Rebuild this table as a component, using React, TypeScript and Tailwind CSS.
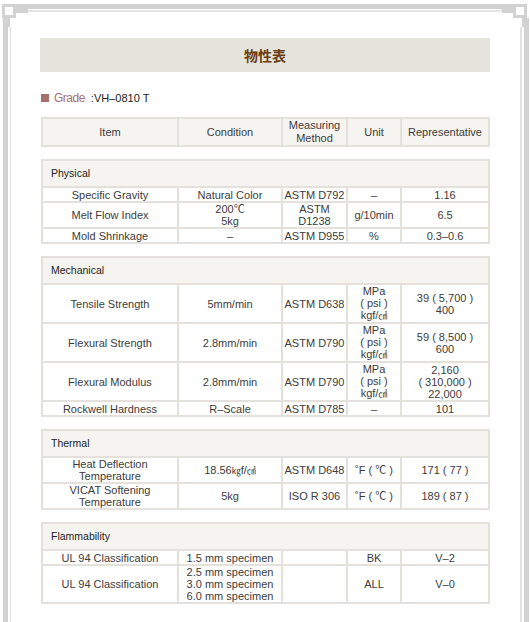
import React from 'react';

type Row = {
  item: React.ReactNode;
  cond: React.ReactNode;
  method: React.ReactNode;
  unit: React.ReactNode;
  rep: React.ReactNode;
};

// small CJK unit glyphs (㎠, ㎏)
const Cjk = ({ c }: { c: string }) => (
  <span className="text-[9px]" style={{ fontFamily: '"Noto Sans CJK KR", sans-serif' }}>
    {c}
  </span>
);

const kgfcm = (
  <>
    kgf/<Cjk c="㎠" />
  </>
);

const sections: { title: string; rows: Row[] }[] = [
  {
    title: 'Physical',
    rows: [
      { item: 'Specific Gravity', cond: 'Natural Color', method: 'ASTM D792', unit: '–', rep: '1.16' },
      {
        item: 'Melt Flow Index',
        cond: (<>200℃<br />5kg</>),
        method: (<>ASTM<br />D1238</>),
        unit: 'g/10min',
        rep: '6.5',
      },
      { item: 'Mold Shrinkage', cond: '–', method: 'ASTM D955', unit: '%', rep: '0.3–0.6' },
    ],
  },
  {
    title: 'Mechanical',
    rows: [
      {
        item: 'Tensile Strength',
        cond: '5mm/min',
        method: 'ASTM D638',
        unit: (<>MPa<br />( psi )<br />{kgfcm}</>),
        rep: (<>39 ( 5,700 )<br />400</>),
      },
      {
        item: 'Flexural Strength',
        cond: '2.8mm/min',
        method: 'ASTM D790',
        unit: (<>MPa<br />( psi )<br />{kgfcm}</>),
        rep: (<>59 ( 8,500 )<br />600</>),
      },
      {
        item: 'Flexural Modulus',
        cond: '2.8mm/min',
        method: 'ASTM D790',
        unit: (<>MPa<br />( psi )<br />{kgfcm}</>),
        rep: (<>2,160<br />( 310,000 )<br />22,000</>),
      },
      { item: 'Rockwell Hardness', cond: 'R–Scale', method: 'ASTM D785', unit: '–', rep: '101' },
    ],
  },
  {
    title: 'Thermal',
    rows: [
      {
        item: (<>Heat Deflection<br />Temperature</>),
        cond: (<>18.56<Cjk c="㎏" />f/<Cjk c="㎠" /></>),
        method: 'ASTM D648',
        unit: '˚F ( ℃ )',
        rep: '171 ( 77 )',
      },
      {
        item: (<>VICAT Softening<br />Temperature</>),
        cond: '5kg',
        method: 'ISO R 306',
        unit: '˚F ( ℃ )',
        rep: '189 ( 87 )',
      },
    ],
  },
  {
    title: 'Flammability',
    rows: [
      { item: 'UL 94 Classification', cond: '1.5 mm specimen', method: '', unit: 'BK', rep: 'V–2' },
      {
        item: 'UL 94 Classification',
        cond: (<>2.5 mm specimen<br />3.0 mm specimen<br />6.0 mm specimen</>),
        method: '',
        unit: 'ALL',
        rep: 'V–0',
      },
    ],
  },
];

const font = { fontFamily: '"Liberation Sans", Arial, "Noto Sans CJK KR", sans-serif' };

function Cols() {
  return (
    <colgroup>
      <col className="w-[136px]" />
      <col className="w-[104px]" />
      <col className="w-[65px]" />
      <col className="w-[54px]" />
      <col className="w-[88px]" />
    </colgroup>
  );
}

const td = 'h-[15px] border border-[#e4e1dc] text-center align-middle leading-[12px] whitespace-nowrap';

function Section({ title, rows }: { title: string; rows: Row[] }) {
  return (
    <table className="mt-[12px] ml-px w-[449px] table-fixed border-separate border-spacing-0 border border-[#e4e1dc] text-[11px] text-[#3c3c3c]">
      <Cols />
      <tbody>
        <tr>
          <td colSpan={5} className="h-[27px] border border-[#e4e1dc] bg-[#f6f4f0] pl-[8px] text-[10.5px] text-[#222]">
            {title}
          </td>
        </tr>
        {rows.map((r, i) => (
          <tr key={i}>
            <td className={td}>{r.item}</td>
            <td className={td}>{r.cond}</td>
            <td className={td}>{r.method}</td>
            <td className={td}>{r.unit}</td>
            <td className={td}>{r.rep}</td>
          </tr>
        ))}
      </tbody>
    </table>
  );
}

function Frame() {
  return (
    <div className="pointer-events-none absolute inset-0">
      {/* top */}
      <div className="absolute left-[16px] right-[16px] top-[4px] h-[5px] bg-[#d2d2d2]" />
      <div className="absolute left-[16px] top-[9px] h-[4px] w-[12px] bg-[#d2d2d2]" />
      <div className="absolute right-[16px] top-[9px] h-[4px] w-[12px] bg-[#d2d2d2]" />
      <div className="absolute left-[28px] right-[28px] top-[10px] h-[2px] bg-[#e4e4e4]" />
      {/* corners */}
      <div className="absolute left-[2px] top-[4px] h-[14px] w-[14px] border-[3px] border-[#d2d2d2] bg-white" />
      <div className="absolute right-[3px] top-[4px] h-[14px] w-[14px] border-[3px] border-[#d2d2d2] bg-white" />
      {/* left */}
      <div className="absolute bottom-0 left-[3px] top-[18px] w-[5px] bg-[#d2d2d2]" />
      <div className="absolute left-[8px] top-[18px] h-[9px] w-[2px] bg-[#d2d2d2]" />
      <div className="absolute bottom-0 left-[10px] top-[27px] w-px bg-[#dcdcdc]" />
      {/* right */}
      <div className="absolute bottom-0 right-[1px] top-[18px] w-[5px] bg-[#d2d2d2]" />
      <div className="absolute right-[6px] top-[18px] h-[9px] w-[2px] bg-[#d2d2d2]" />
      <div className="absolute bottom-0 right-[8px] top-[27px] w-[2px] bg-[#e2e2e2]" />
    </div>
  );
}

export default function App() {
  return (
    <div className="relative h-[622px] w-[530px] overflow-hidden bg-white" style={font}>
      <Frame />
      <div className="relative ml-[40px] w-[450px] pt-[38px]">
        <div className="flex h-[34px] items-center justify-center bg-[#e5e4dc]">
          <h1
            className="text-[14px] font-bold text-[#6b3c12]"
            style={{ fontFamily: '"Noto Sans CJK KR", "Noto Sans CJK SC", sans-serif' }}
          >
            物性表
          </h1>
        </div>

        <div className="mt-[18px] flex h-[16px] items-center">
          <span className="ml-px mr-[5px] h-[8px] w-[8px] bg-[#a5706a]" />
          <span className="text-[12px] tracking-[-0.5px] text-[#a5706a]">Grade</span>
          <span className="ml-[6px] text-[11px] text-[#222]">:VH–0810 T</span>
        </div>

        <table className="mt-[11px] ml-px w-[449px] table-fixed border-separate border-spacing-0 border border-[#e4e1dc] text-[11px] text-[#3c3c3c]">
          <Cols />
          <tbody>
            <tr className="bg-[#f6f4f0]">
              <td className="h-[28px] border border-[#e4e1dc] text-center leading-[13px]">Item</td>
              <td className="border border-[#e4e1dc] text-center leading-[13px]">Condition</td>
              <td className="border border-[#e4e1dc] text-center leading-[13px]">
                Measuring
                <br />
                Method
              </td>
              <td className="border border-[#e4e1dc] text-center leading-[13px]">Unit</td>
              <td className="border border-[#e4e1dc] text-center leading-[13px]">Representative</td>
            </tr>
          </tbody>
        </table>

        {sections.map((s) => (
          <Section key={s.title} title={s.title} rows={s.rows} />
        ))}
      </div>
    </div>
  );
}
